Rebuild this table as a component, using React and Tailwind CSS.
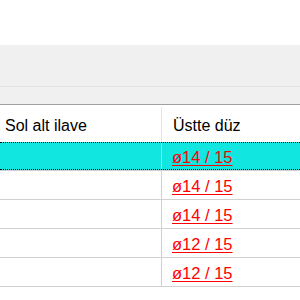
import React from 'react';

const rows = [
  { left: '', right: 'ø14 / 15', selected: true },
  { left: '', right: 'ø14 / 15' },
  { left: '', right: 'ø14 / 15' },
  { left: '', right: 'ø12 / 15' },
  { left: '', right: 'ø12 / 15' },
];

export default function App() {
  return (
    <div className="w-[300px] h-[300px] bg-white overflow-hidden font-['Liberation_Sans',Arial,sans-serif] text-[16px]">
      {/* empty area above the grid */}
      <div className="h-[45px] bg-white" />

      {/* toolbar bands */}
      <div className="h-[41px] bg-[#f0f0f0]" />
      <div className="h-[1px] bg-[#e2e2e2]" />
      <div className="h-[18px] bg-[#f0f0f0] border-b border-[#a0a0a0]" />

      {/* column headers */}
      <div className="flex h-[37px] bg-white">
        <div className="w-[161px] flex items-center pl-[5px] pt-[5px] text-black">Sol alt ilave</div>
        <div className="w-[1px] mt-[2px] bg-[#e5e5e5]" />
        <div className="flex-1 flex items-center pl-[11px] pt-[5px] text-black">Üstte düz</div>
      </div>

      {/* rows */}
      {rows.map((r, i) => (
        <div key={i} className="h-[29px] border-b border-[#d0d0d0]">
          <div
            className={
              r.selected
                ? 'flex h-[28px] bg-[#12e6e0] border-y border-dotted border-black'
                : 'flex h-[28px] bg-white'
            }
          >
            <div className="w-[161px]">{r.left}</div>
            <div className="w-[1px] bg-[#d0d0d0]" />
            <div className="flex-1 flex items-center pl-[10px] pt-[3px]">
              <span className="text-[#ff0000] text-[16.5px] underline underline-offset-[2px] leading-none">{r.right}</span>
            </div>
          </div>
        </div>
      ))}
    </div>
  );
}
